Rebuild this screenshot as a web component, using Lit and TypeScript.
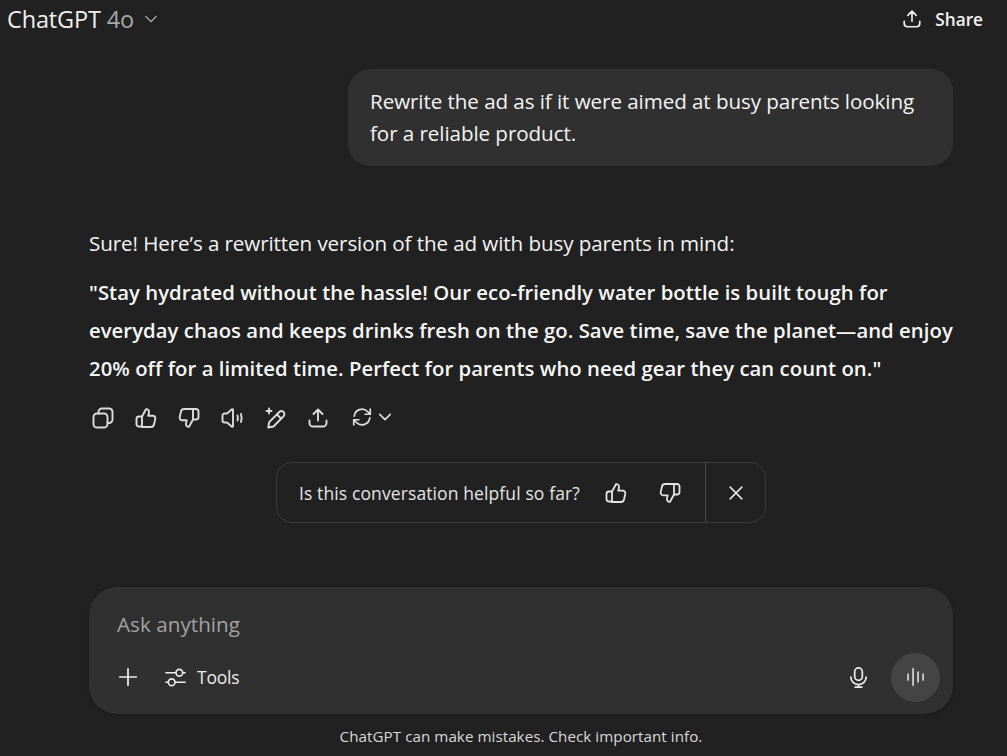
import { LitElement, html, css, svg } from "lit";
import { customElement } from "lit/decorators.js";

const icon = (size: number, body: unknown, sw = 2) => html`<svg width=${size} height=${size} viewBox="0 0 24 24" fill="none" stroke="currentColor" stroke-width=${sw} stroke-linecap="round" stroke-linejoin="round">${body}</svg>`;

const share = svg`<path d="M12 14.500V3.500M7.500 8 12 3.500 16.500 8"/><path d="M3.500 14.500v2.500a3.500 3.500 0 0 0 3.500 3.500h10a3.500 3.500 0 0 0 3.500-3.500v-2.500"/>`;
const thumbUp = svg`<path d="M8 10.500 12 3.200c1.600-.4 3 .8 3 2.500 0 1.300-.4 2.800-.8 4h4.600a2.600 2.600 0 0 1 2.500 3.200l-1.300 5.600a3.200 3.200 0 0 1-3.100 2.500H8z"/><path d="M8 10.500H5a2.500 2.500 0 0 0-2.500 2.500v5a2.500 2.500 0 0 0 2.500 2.500h3"/>`;
const thumbDown = svg`<path d="M16 13.500 12 20.800c-1.600.4-3-.8-3-2.500 0-1.300.4-2.800.8-4H5.200a2.600 2.600 0 0 1-2.500-3.200L4 5.500a3.200 3.200 0 0 1 3.100-2.500H16z"/><path d="M16 3h3a2.500 2.500 0 0 1 2.500 2.500v5.500a2.500 2.500 0 0 1-2.500 2.500h-3"/>`;
const copy = svg`<rect x="2.500" y="7.500" width="14" height="14" rx="3.500"/><path d="M7.500 7.500V6a3.500 3.500 0 0 1 3.500-3.500h7.500A3.500 3.500 0 0 1 21.500 6v7.500a3.500 3.500 0 0 1-3.500 3.500h-1.500"/>`;
const speaker = svg`<path d="M13 3.500v17l-1 .3L7 16.500H4.500a2 2 0 0 1-2-2v-5a2 2 0 0 1 2-2H7l5-4.300z"/><path d="M17.500 9.500c.5 1.600.5 3.400 0 5M21 8c.8 2.600.8 5.400 0 8"/>`;
const pencil = svg`<path d="M10.500 20.500 5.200 21.500l1-5.400L16.300 6a3 3 0 0 1 4.200 0 3 3 0 0 1 0 4.300z"/><path d="M14 8.500l4 4"/><path d="M6 2.500v5M3.500 5h5"/>`;
const regen = svg`<path d="M3.500 11a8.500 8.500 0 0 1 14.500-5l3 3M21 3.500V9h-5.500"/><path d="M20.500 13a8.500 8.500 0 0 1-14.500 5l-3-3M3 20.500V15h5.500"/>`;
const chevron = svg`<path d="M5 8.500 12 15.500 19 8.500"/>`;
const close = svg`<path d="M5 5 19 19M19 5 5 19"/>`;
const plus = svg`<path d="M12 3v18M3 12h18"/>`;
const sliders = svg`<path d="M2 7h10M20 7h2M2 17h2M12 17h10"/><circle cx="16" cy="7" r="3.500"/><circle cx="8" cy="17" r="3.500"/>`;
const mic = svg`<rect x="8" y="2" width="8" height="13" rx="4"/><path d="M4 11.500a8 8 0 0 0 16 0M12 19.500V22M8.500 22h7"/>`;
const wave = svg`<path d="M2.500 8.500v7M8.500 2v20M14.500 6v12M20.500 8.500v7"/>`;

@customElement("app-root")
export class AppRoot extends LitElement {
  static styles = css`
    :host {
      display: flex;
      flex-direction: column;
      width: 1007px;
      height: 756px;
      overflow: hidden;
      background: #212121;
      color: #ececec;
      font-family: "Open Sans", "Noto Sans", sans-serif;
    }
    svg { display: block; flex: none; }
    .top {
      display: flex;
      justify-content: space-between;
      align-items: center;
      height: 38px;
      padding: 0 24px 0 7px;
    }
    .model { display: flex; align-items: center; font-size: 23.500px; letter-spacing: -0.150px; color: #f0f0f0; }
    .ver { color: #a8a8a8; margin-left: 6px; }
    .model svg { color: #b0b0b0; margin-left: 8px; }
    .share { display: flex; align-items: center; gap: 12px; font-size: 17.200px; font-weight: 600; color: #f2f2f2; }
    .user-row { display: flex; justify-content: flex-end; padding: 31px 54px 0 0; }
    .bubble {
      width: 605px;
      box-sizing: border-box;
      height: 97px;
      padding: 16px 22px;
      background: #303030;
      border-radius: 22px;
      font-size: 20.600px;
      line-height: 32px;
      letter-spacing: -0.070px;
      color: #f4f4f4;
    }
    .reply { padding: 61px 0 0 89px; font-size: 20.600px; letter-spacing: -0.090px; color: #f4f4f4; }
    .intro { line-height: 32px; height: 32px; }
    .quote { margin-top: 14px; font-weight: 600; line-height: 38px; width: 870px; font-size: 20.300px; letter-spacing: 0.050px; color: #f7f7f7; }
    .actions { display: flex; align-items: center; gap: 19px; height: 32px; margin: 15px 0 0 2px; color: #dcdcdc; }
    .regen { display: flex; align-items: center; gap: 3px; margin: -3px 0 0 2px; }
    .feedback-row { display: flex; justify-content: center; padding: 28px 0 0 35px; }
    .feedback {
      box-sizing: border-box;
      width: 490px;
      height: 61px;
      display: flex;
      align-items: center;
      border: 1px solid #3c3c3c;
      border-radius: 16px;
    }
    .ask { flex: 1; display: flex; align-items: center; padding-left: 22px; font-size: 17.500px; letter-spacing: 0.110px; color: #e4e4e4; }
    .ask svg:first-of-type { margin-left: 24px; }
    .ask svg:last-of-type { margin-left: 30px; }
    .x { width: 59px; height: 100%; display: flex; align-items: center; justify-content: center; border-left: 1px solid #4a4a4a; color: #e6e6e6; }
    .composer-row { padding: 64px 54px 0 89px; }
    .composer {
      box-sizing: border-box;
      height: 127px;
      background: #303030;
      border-radius: 28px;
      padding: 20px 13px 13px 28px;
      display: flex;
      flex-direction: column;
      justify-content: space-between;
      box-shadow: 0 1px 3px rgba(0,0,0,.25);
    }
    .placeholder { font-size: 20.600px; line-height: 34px; letter-spacing: 0.050px; color: #a3a3a3; }
    .bar { display: flex; align-items: center; height: 48px; color: #ececec; }
    .bar .tools { display: flex; align-items: center; gap: 10px; margin-left: 25px; font-size: 17.500px; letter-spacing: -0.200px; }
    .bar .spacer { flex: 1; }
    .voice { width: 49px; height: 49px; border-radius: 50%; background: #444; display: flex; align-items: center; justify-content: center; margin-left: 21px; color: #d8d8d8; }
    .foot { text-align: center; padding: 12px 0 0 35px; font-size: 15.200px; line-height: 20px; letter-spacing: 0.040px; color: #d8d8d8; }
  `;

  render() {
    return html`
      <div class="top">
        <div class="model">ChatGPT<span class="ver">4o</span>${icon(18, chevron, 1.800)}</div>
        <div class="share">${icon(22, share, 1.800)}Share</div>
      </div>
      <div class="user-row">
        <div class="bubble">Rewrite the ad as if it were aimed at busy parents looking for a reliable product.</div>
      </div>
      <div class="reply">
        <div class="intro">Sure! Here’s a rewritten version of the ad with busy parents in mind:</div>
        <div class="quote">"Stay hydrated without the hassle! Our eco-friendly water bottle is built tough for everyday chaos and keeps drinks fresh on the go. Save time, save the planet—and enjoy 20% off for a limited time. Perfect for parents who need gear they can count on."</div>
        <div class="actions">
          ${icon(24, copy, 1.900)}${icon(24, thumbUp, 1.900)}${icon(24, thumbDown, 1.900)}${icon(24, speaker, 1.900)}${icon(24, pencil, 1.900)}${icon(24, share, 1.900)}
          <div class="regen">${icon(22, regen, 1.900)}${icon(18, chevron, 2.200)}</div>
        </div>
      </div>
      <div class="feedback-row">
        <div class="feedback">
          <div class="ask">Is this conversation helpful so far?${icon(24, thumbUp, 1.800)}${icon(24, thumbDown, 1.800)}</div>
          <div class="x">${icon(20, close, 1.900)}</div>
        </div>
      </div>
      <div class="composer-row">
        <div class="composer">
          <div class="placeholder">Ask anything</div>
          <div class="bar">
            ${icon(22, plus, 1.900)}
            <div class="tools">${icon(23, sliders, 1.700)}Tools</div>
            <div class="spacer"></div>
            ${icon(23, mic, 1.800)}
            <div class="voice">${icon(20, wave, 2)}</div>
          </div>
        </div>
      </div>
      <div class="foot">ChatGPT can make mistakes. Check important info.</div>
    `;
  }
}
